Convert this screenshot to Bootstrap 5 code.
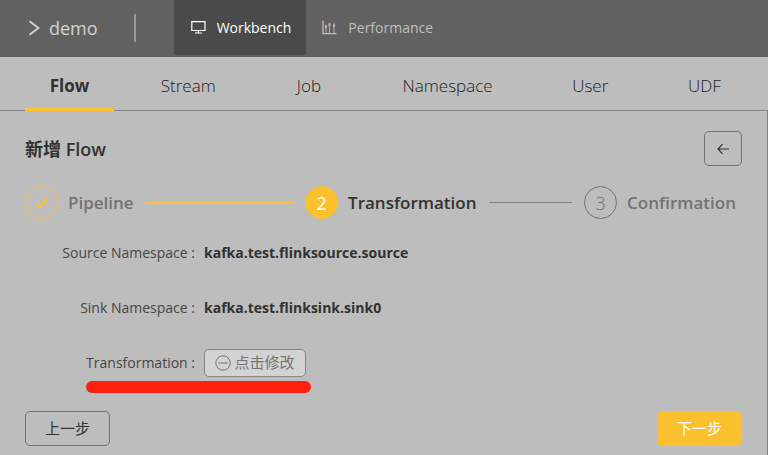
<!DOCTYPE html>
<html lang="zh-CN">
<head>
<meta charset="utf-8">
<meta name="viewport" content="width=device-width, initial-scale=1">
<title>demo - Flow</title>
<link rel="stylesheet" href="https://cdn.jsdelivr.net/npm/bootstrap@5.3.0/dist/css/bootstrap.min.css">
<style>
  :root { --ink: #323232; --edge: #737373; --gold: #fbc02d; --panel: #bdbdbd; }
  body { background: var(--panel); color: var(--ink); font-family: "Open Sans", "Noto Sans CJK SC", sans-serif; font-size: 14px; line-height: 20px; }
  svg { flex: none; }
  .topbar { background: #616161; height: 57px; padding: 0 0 1px 27px; }
  .brand { color: #d2d2d2; font-size: 18px; gap: 9px; }
  .divider { width: 2px; height: 28px; background: #999; margin: 0 38px 0 36px; }
  .main-link { color: #bfbfbf; gap: 11px; padding: 0 16px; margin-bottom: 1px; }
  .main-link.active { background: #4a4a4a; color: #fff; padding: 0 15px 0 17px; }
  .tabs { display: grid; grid-template-columns: 89fr 148fr 93fr 184fr 101fr 127fr; border-bottom: 1px solid #858585; height: 54px; padding-left: 25px; }
  .tab-link { color: var(--ink); font-size: 17px; font-weight: 300; border-bottom: 3px solid transparent; padding-top: 6px; margin-bottom: -1px; }
  .tab-link:not(.active) { color: #1c1c1c; }
  .tab-link.active { border-color: var(--gold); font-weight: 700; }
  .workspace { border-right: 1px solid #858585; padding: 20px 25px 9px; min-height: calc(100vh - 111px); }
  .title { font-size: 18px; line-height: 24px; font-weight: 600; }
  .square { width: 38px; height: 35px; border: 1px solid var(--edge); border-radius: 5px; color: var(--ink); }
  .steps { display: grid; grid-template-columns: 280fr 279fr auto; margin-top: 20px; padding-right: 6px; }
  .step { color: var(--edge); font-size: 17px; font-weight: 600; }
  .step-dot { width: 33px; height: 33px; border: 1px solid currentColor; border-radius: 50%; font-size: 18px; font-weight: 300; margin-right: 10px; flex: none; }
  .step.done .step-dot { color: var(--gold); }
  .step.now { color: var(--ink); }
  .step.now .step-dot { background: var(--gold); border-color: var(--gold); color: #fff; font-weight: 400; }
  .step-line { height: 1px; background: #858585; margin: 0 12px; }
  .step.done .step-line { height: 2px; background: var(--gold); }
  .fields { display: grid; grid-template-columns: 170px 1fr; column-gap: 9px; grid-auto-rows: 55px; align-items: center; margin: 6px 0 0; }
  .fields dt { font-weight: 400; text-align: right; color: #464646; }
  .fields dd { margin: 0; font-weight: 700; }
  .edit-btn { background: #d3d3d3; color: #757575; border: 1px solid #858585; border-radius: 5px; height: 28px; width: 102px; font-size: 15px; gap: 3px; }
  .marked { position: relative; }
  .marked::after { content: ""; position: absolute; left: -118px; top: 32px; width: 225px; height: 12px; border-radius: 6px; background: #ff1f10; }
  .actions { margin-top: 21px; }
  .step-btn { width: 85px; height: 35px; border: 1px solid var(--edge); border-radius: 5px; background: none; color: var(--ink); font-size: 15px; }
  .step-btn.next { background: var(--gold); border-color: var(--gold); color: #fff; }
</style>
<script src="https://cdn.jsdelivr.net/npm/bootstrap@5.3.0/dist/js/bootstrap.bundle.min.js"></script>
</head>
<body>
<header class="topbar d-flex align-items-center">
  <a href="#" class="brand d-flex align-items-center text-decoration-none">
    <svg width="13" height="16" viewBox="0 0 13 16" fill="none" stroke="currentColor" stroke-width="2" aria-hidden="true"><path d="M2.5 1.2 11.5 8 2.5 14.8"/></svg>demo</a>
  <span class="divider"></span>
  <nav class="d-flex align-self-stretch" aria-label="Main">
    <a href="#" class="main-link active d-flex align-items-center text-decoration-none" aria-current="page">
      <svg width="15" height="13" viewBox="0 0 15 13" fill="none" stroke="currentColor" stroke-width="1.200" aria-hidden="true"><path d="M.8.6h13.200v8.900H.8zM7.400 9.500v2.500M4 12h7"/></svg>Workbench</a>
    <a href="#" class="main-link d-flex align-items-center text-decoration-none">
      <svg width="15" height="15" viewBox="0 0 15 15" fill="none" stroke="currentColor" aria-hidden="true"><path d="M1 .5v13.200h13.500" stroke-width="1.300"/><path d="M4 5v8M7.500 3v10M12 3v10" stroke="#b9a6d0"/><path d="M3 5.500h2v2.500H3zM6.500 3.500h2v2.500h-2zM11 4.500h2v2.500h-2z" fill="#d0b4bb" stroke="none"/></svg>Performance</a>
  </nav>
</header>
<nav class="tabs" aria-label="Sections">
  <a href="#" class="tab-link active d-flex align-items-center justify-content-center text-decoration-none" aria-current="page">Flow</a>
  <a href="#" class="tab-link d-flex align-items-center justify-content-center text-decoration-none">Stream</a>
  <a href="#" class="tab-link d-flex align-items-center justify-content-center text-decoration-none">Job</a>
  <a href="#" class="tab-link d-flex align-items-center justify-content-center text-decoration-none">Namespace</a>
  <a href="#" class="tab-link d-flex align-items-center justify-content-center text-decoration-none">User</a>
  <a href="#" class="tab-link d-flex align-items-center justify-content-center text-decoration-none">UDF</a>
</nav>
<main class="workspace">
  <div class="d-flex align-items-center justify-content-between">
    <h1 class="title m-0">新增 Flow</h1>
    <button type="button" class="btn square p-0 d-flex align-items-center justify-content-center" aria-label="返回">
      <svg width="12" height="12" viewBox="0 0 12 12" fill="none" stroke="currentColor" stroke-width="1.200" aria-hidden="true"><path d="M12 6H1M5.500 1.200 1 6l4.500 4.800"/></svg>
    </button>
  </div>
  <div class="steps">
    <div class="step done d-flex align-items-center">
      <span class="step-dot d-flex align-items-center justify-content-center"><svg width="14" height="12" viewBox="0 0 14 12" fill="none" stroke="currentColor" stroke-width="2" aria-hidden="true"><path d="M1.500 6 5 10 12.500 1.500"/></svg></span>
      <span>Pipeline</span><span class="step-line flex-grow-1"></span>
    </div>
    <div class="step now d-flex align-items-center">
      <span class="step-dot d-flex align-items-center justify-content-center">2</span>
      <span>Transformation</span><span class="step-line flex-grow-1"></span>
    </div>
    <div class="step d-flex align-items-center">
      <span class="step-dot d-flex align-items-center justify-content-center">3</span>
      <span>Confirmation</span>
    </div>
  </div>
  <dl class="fields">
    <dt>Source Namespace :</dt><dd>kafka.test.flinksource.source</dd>
    <dt>Sink Namespace :</dt><dd>kafka.test.flinksink.sink0</dd>
    <dt>Transformation :</dt>
    <dd class="marked"><button type="button" class="btn edit-btn p-0 d-flex align-items-center justify-content-center">
      <svg width="16" height="16" viewBox="0 0 16 16" fill="none" stroke="currentColor" aria-hidden="true"><circle cx="8" cy="8" r="7.200"/><path d="M3.500 8h9"/></svg>点击修改</button></dd>
  </dl>
  <div class="actions d-flex justify-content-between">
    <button type="button" class="btn step-btn p-0">上一步</button>
    <button type="button" class="btn step-btn next p-0">下一步</button>
  </div>
</main>
</body>
</html>
